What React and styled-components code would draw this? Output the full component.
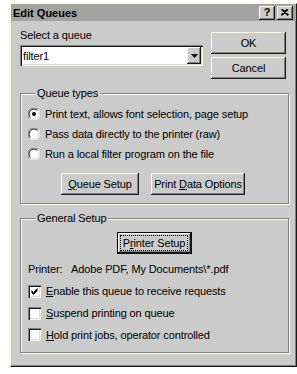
import React from "react";
import styled, { createGlobalStyle } from "styled-components";

const FACE = "#cbcbcb";
const LIGHT = "#fbfbe4";
const SHADOW = "#808080";
const DARK = "#1a1a1a";

const Global = createGlobalStyle`
  html, body { margin: 0; padding: 0; background: #fff; }
  body { font-family: "Liberation Sans", Arial, sans-serif; font-size: 11px; color: #000; letter-spacing: -0.12px; }
`;

const Page = styled.div`
  padding: 3px 0 0 10px;
`;

const Window = styled.div`
  box-sizing: border-box;
  width: 287px;
  height: 364px;
  background: ${FACE};
  border: 1px solid;
  border-color: ${LIGHT} ${DARK} ${DARK} ${LIGHT};
  box-shadow: inset -1px -1px ${SHADOW};
  display: flex;
  flex-direction: column;
`;

const TitleBar = styled.div`
  height: 17px;
  background: #a3a3a3;
  display: flex;
  align-items: center;
  padding: 0 2px 0 2px;
  font-weight: bold;
  font-size: 11px;
  letter-spacing: 0;
`;

const TitleText = styled.span`
  flex: 1;
`;

const TitleButtons = styled.div`
  display: flex;
  gap: 2px;
  margin-right: 1px;
`;

const raised = `
  background: ${FACE};
  box-shadow: inset -1px -1px ${DARK}, inset 1px 1px ${LIGHT}, inset -2px -2px ${SHADOW};
`;

const CapButton = styled.div`
  ${raised}
  width: 16px;
  height: 14px;
  display: flex;
  align-items: center;
  justify-content: center;
  font-weight: bold;
  font-size: 11px;
  line-height: 1;
`;

const Body = styled.div`
  padding: 8px 7px 0 9px;
  display: flex;
  flex-direction: column;
`;

const TopRow = styled.div`
  display: flex;
  justify-content: space-between;
  align-items: flex-start;
`;

const QueueCol = styled.div`
  display: flex;
  flex-direction: column;
  gap: 3px;
`;

const Label = styled.div`
  line-height: 13px;
`;

const Combo = styled.div`
  box-sizing: border-box;
  width: 183px;
  height: 21px;
  background: #fff;
  box-shadow: inset 1px 1px ${SHADOW}, inset 2px 2px ${DARK}, inset -1px -1px ${LIGHT}, inset -2px -2px #dcdcdc;
  display: flex;
  align-items: center;
  padding: 2px;
`;

const ComboText = styled.span`
  flex: 1;
  padding-left: 1px;
`;

const ComboArrow = styled.div`
  ${raised}
  width: 14px;
  height: 17px;
  display: flex;
  align-items: center;
  justify-content: center;
`;

const ActionCol = styled.div`
  display: flex;
  flex-direction: column;
  gap: 3px;
  padding-top: 3px;
  margin-right: 3px;
`;

const Button = styled.div`
  ${raised}
  box-sizing: border-box;
  width: ${(p) => p.$w}px;
  height: ${(p) => p.$h || 22}px;
  display: flex;
  align-items: center;
  justify-content: center;
  font-size: 11px;
  white-space: nowrap;
`;

const DefaultButton = styled(Button)`
  border: 1px solid #000;
  box-shadow: inset -1px -1px ${DARK}, inset 1px 1px ${LIGHT}, inset -2px -2px ${SHADOW};
`;

const Focus = styled.span`
  padding: 1px 2px;
  outline: 1px dotted #000;
  outline-offset: 0;
`;

const Group = styled.fieldset`
  box-sizing: border-box;
  margin: ${(p) => p.$top}px 0 0 0;
  padding: ${(p) => p.$pad};
  border: 1px solid ${SHADOW};
  box-shadow: inset 1px 1px ${LIGHT}, 1px 1px ${LIGHT};
  display: flex;
  flex-direction: column;
  min-width: 0;
`;

const Legend = styled.legend`
  margin-left: 7px;
  padding: 0 2px;
  line-height: 13px;
  background: ${FACE};
`;

const OptionRow = styled.div`
  height: ${(p) => p.$h}px;
  display: flex;
  align-items: center;
  gap: 5px;
`;

const ButtonRow = styled.div`
  display: flex;
  justify-content: center;
  gap: 12px;
  margin-top: 9px;
  padding-right: 4px;
`;

const CenterRow = styled.div`
  display: flex;
  justify-content: center;
  margin-top: 7px;
  padding-right: 2px;
`;

const InfoRow = styled.div`
  display: flex;
  margin-top: 9px;
  line-height: 13px;
`;

const InfoLabel = styled.span`
  width: 43px;
`;

const CheckList = styled.div`
  display: flex;
  flex-direction: column;
  margin-top: 4px;
`;

const Box = styled.span`
  box-sizing: border-box;
  width: 13px;
  height: 13px;
  background: #fff;
  box-shadow: inset 1px 1px ${SHADOW}, inset 2px 2px ${DARK}, inset -1px -1px ${LIGHT}, inset -2px -2px #dcdcdc;
  display: flex;
  align-items: center;
  justify-content: center;
  flex: none;
`;

const Radio = ({ on }) => (
  <svg width="12" height="12" viewBox="0 0 12 12" style={{ flex: "none" }}>
    <circle cx="6" cy="6" r="5.5" fill="#fff" />
    <path d="M1.6 10.4 A5.5 5.5 0 0 1 10.4 1.6" stroke={SHADOW} strokeWidth="1" fill="none" />
    <path d="M10.4 1.6 A5.5 5.5 0 0 1 1.6 10.4" stroke={LIGHT} strokeWidth="1" fill="none" />
    <path d="M2.5 9.5 A4.5 4.5 0 0 1 9.5 2.5" stroke={DARK} strokeWidth="1" fill="none" />
    <path d="M9.5 2.5 A4.5 4.5 0 0 1 2.5 9.5" stroke="#dcdcdc" strokeWidth="1" fill="none" />
    {on && <circle cx="6" cy="6" r="2" fill="#000" />}
  </svg>
);

const Check = ({ on }) => (
  <Box>
    {on && (
      <svg width="7" height="7" viewBox="0 0 7 7">
        <path d="M0.5 2.5 L2.5 4.5 L6.5 0.5 M0.5 3.5 L2.5 5.5 L6.5 1.5 M0.5 4.5 L2.5 6.5 L6.5 2.5" stroke="#000" strokeWidth="1" fill="none" />
      </svg>
    )}
  </Box>
);

const U = styled.span`
  text-decoration: underline;
`;

export default function App() {
  return (
    <Page>
      <Global />
      <Window>
        <TitleBar>
          <TitleText>Edit Queues</TitleText>
          <TitleButtons>
            <CapButton>?</CapButton>
            <CapButton>
              <svg width="8" height="7" viewBox="0 0 8 7">
                <path d="M0.5 0.5 L7 6.5 M1.5 0.5 L7.5 6 M7 0.5 L0.5 6.5 M6 0.5 L0.5 5.5" stroke="#000" strokeWidth="1.1" fill="none" />
              </svg>
            </CapButton>
          </TitleButtons>
        </TitleBar>
        <Body>
          <TopRow>
            <QueueCol>
              <Label>Select a queue</Label>
              <Combo>
                <ComboText>filter1</ComboText>
                <ComboArrow>
                  <svg width="7" height="4" viewBox="0 0 7 4">
                    <path d="M0 0 H7 L3.5 4 Z" fill="#000" />
                  </svg>
                </ComboArrow>
              </Combo>
            </QueueCol>
            <ActionCol>
              <Button $w={75}>OK</Button>
              <Button $w={75}>Cancel</Button>
            </ActionCol>
          </TopRow>

          <Group $top={8} $pad="4px 6px 8px 7px">
            <Legend>Queue types</Legend>
            <OptionRow $h={20}>
              <Radio on />
              <span>Print text, allows font selection, page setup</span>
            </OptionRow>
            <OptionRow $h={20}>
              <Radio />
              <span>Pass data directly to the printer (raw)</span>
            </OptionRow>
            <OptionRow $h={20}>
              <Radio />
              <span>Run a local filter program on the file</span>
            </OptionRow>
            <ButtonRow>
              <Button $w={78}>
                <span><U>Q</U>ueue Setup</span>
              </Button>
              <Button $w={94}>
                <span>Print <U>D</U>ata Options</span>
              </Button>
            </ButtonRow>
          </Group>

          <Group $top={8} $pad="0 6px 7px 7px">
            <Legend>General Setup</Legend>
            <CenterRow>
              <DefaultButton $w={75}>
                <Focus>P<U>r</U>inter Setup</Focus>
              </DefaultButton>
            </CenterRow>
            <InfoRow>
              <InfoLabel>Printer:</InfoLabel>
              <span>Adobe PDF, My Documents\*.pdf</span>
            </InfoRow>
            <CheckList>
              <OptionRow $h={22}>
                <Check on />
                <span><U>E</U>nable this queue to receive requests</span>
              </OptionRow>
              <OptionRow $h={22}>
                <Check />
                <span><U>S</U>uspend printing on queue</span>
              </OptionRow>
              <OptionRow $h={21}>
                <Check />
                <span><U>H</U>old print jobs, operator controlled</span>
              </OptionRow>
            </CheckList>
          </Group>
        </Body>
      </Window>
    </Page>
  );
}
